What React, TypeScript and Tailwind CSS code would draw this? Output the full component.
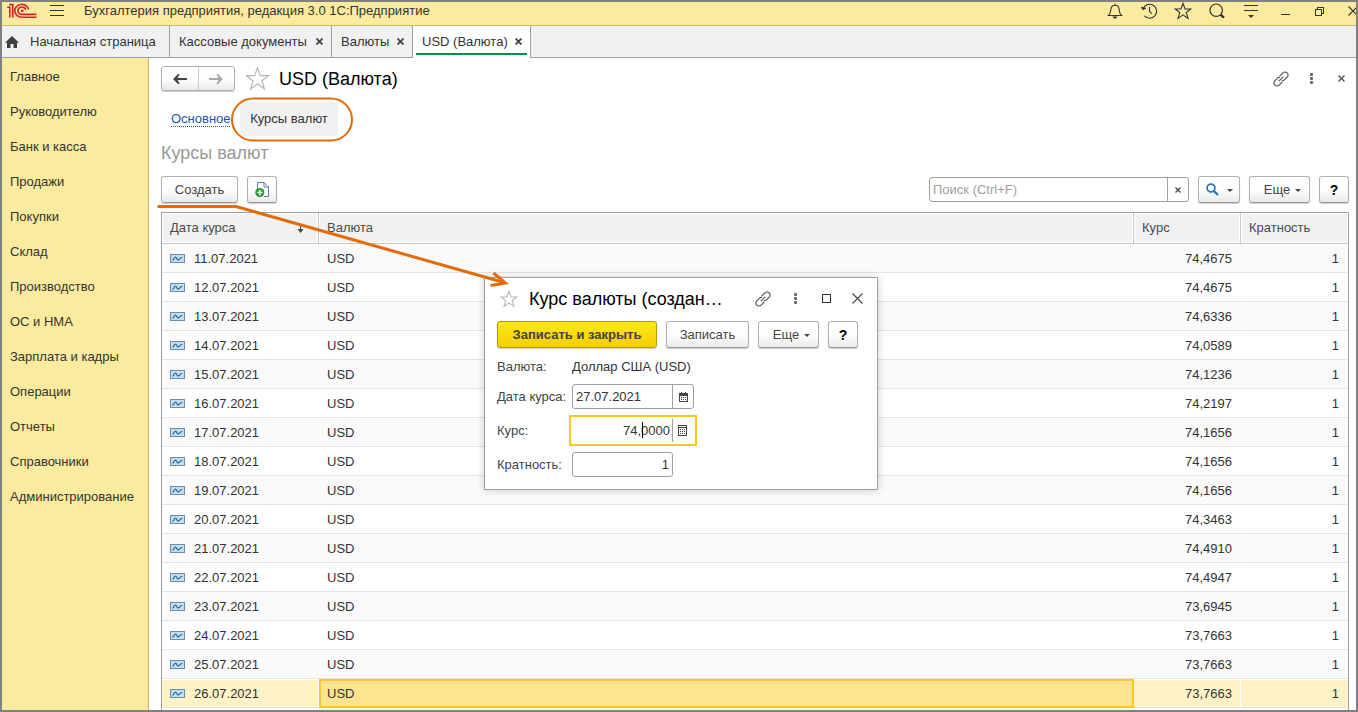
import type { ReactNode } from "react";
import clsx from "clsx";

const sections = [
  "Главное",
  "Руководителю",
  "Банк и касса",
  "Продажи",
  "Покупки",
  "Склад",
  "Производство",
  "ОС и НМА",
  "Зарплата и кадры",
  "Операции",
  "Отчеты",
  "Справочники",
  "Администрирование",
];

const rates = [
  { date: "11.07.2021", rate: "74,4675" },
  { date: "12.07.2021", rate: "74,4675" },
  { date: "13.07.2021", rate: "74,6336" },
  { date: "14.07.2021", rate: "74,0589" },
  { date: "15.07.2021", rate: "74,1236" },
  { date: "16.07.2021", rate: "74,2197" },
  { date: "17.07.2021", rate: "74,1656" },
  { date: "18.07.2021", rate: "74,1656" },
  { date: "19.07.2021", rate: "74,1656" },
  { date: "20.07.2021", rate: "74,3463" },
  { date: "21.07.2021", rate: "74,4910" },
  { date: "22.07.2021", rate: "74,4947" },
  { date: "23.07.2021", rate: "73,6945" },
  { date: "24.07.2021", rate: "73,7663" },
  { date: "25.07.2021", rate: "73,7663" },
  { date: "26.07.2021", rate: "73,7663" },
];

const selectedDate = "26.07.2021";

/* ---------- icons ---------- */

function Logo() {
  return (
    <svg width="30" height="16" viewBox="0 0 30 16" fill="none" stroke="#d8232a" strokeWidth="1.6">
      <path d="M0.2 4.2H2.8V14.6" />
      <path d="M2.2 1.6H5.8V14.6" />
      <path d="M21.6 6.4A7 6.4 0 1 0 15 14.2H29.5" />
      <path d="M18.8 6.8A4 3.6 0 1 0 15 11.4H29.5" />
      <circle cx="15.2" cy="7.8" r="0.6" />
    </svg>
  );
}

function MenuIcon() {
  return (
    <svg width="14" height="12" viewBox="0 0 14 12" stroke="#333" shapeRendering="crispEdges">
      <path d="M0 0.5H14M0 5.5H14M0 10.5H14" />
    </svg>
  );
}

function BellIcon() {
  return (
    <svg width="16" height="16" viewBox="0 0 16 16" fill="none" stroke="#333" strokeWidth="1.1">
      <path d="M8 0.6V2.2M1.5 12.5H14.5C12.5 10.8 12.4 9.6 12.2 7C12 4 10.5 2.2 8 2.2S4 4 3.8 7C3.6 9.6 3.5 10.8 1.5 12.5Z" />
      <path d="M5.4 13.6H10.6L9 15.4H7Z" fill="#333" stroke="none" />
    </svg>
  );
}

function HistoryIcon() {
  return (
    <svg width="16" height="16" viewBox="0 0 16 16" fill="none" stroke="#333" strokeWidth="1.1">
      <path d="M2.1 5.6A7 7 0 1 1 3.4 12.9" />
      <path d="M8.5 4V8.3L10.8 10.6" />
      <path d="M0 4.2L2 6.8L4.8 5.2Z" fill="#333" strokeWidth="0.8" />
    </svg>
  );
}

function StarIcon({ size, color }: { size: number; color: string }) {
  return (
    <svg width={size} height={size} viewBox="0 0 16 16" fill="none" stroke={color} strokeWidth={size > 20 ? 0.8 : 1}>
      <path d="M8 1.2L9.8 6.2H15L10.9 9.4L12.4 14.6L8 11.4L3.6 14.6L5.1 9.4L1 6.2H6.2Z" />
    </svg>
  );
}

function SearchIcon() {
  return (
    <svg width="16" height="16" viewBox="0 0 16 16" fill="none" stroke="#333">
      <circle cx="7.2" cy="7.2" r="6.2" strokeWidth="1.2" />
      <path d="M11.4 11.6L15 14.6" strokeWidth="2.4" />
    </svg>
  );
}

function ServiceIcon() {
  return (
    <svg width="14" height="14" viewBox="0 0 14 14" stroke="#333">
      <path d="M0 1.5H14M0 6.5H14" shapeRendering="crispEdges" />
      <path d="M4 11H10L7 14Z" fill="#333" stroke="none" />
    </svg>
  );
}

function MinimizeIcon() {
  return (
    <svg width="10" height="10" viewBox="0 0 10 10" stroke="#333" shapeRendering="crispEdges">
      <path d="M1 8.5H10" />
    </svg>
  );
}

function RestoreIcon() {
  return (
    <svg width="10" height="10" viewBox="0 0 10 10" fill="none" stroke="#333" shapeRendering="crispEdges">
      <path d="M1.5 3.5H7.5V9.5H1.5ZM3.5 3.5V1.5H9.5V7.5H7.5" />
    </svg>
  );
}

function CrossIcon({ size, color = "#444", width = 1.1 }: { size: number; color?: string; width?: number }) {
  return (
    <svg width={size} height={size} viewBox={`0 0 ${size} ${size}`} stroke={color} strokeWidth={width}>
      <path d={`M0.5 0.5L${size - 0.5} ${size - 0.5}M${size - 0.5} 0.5L0.5 ${size - 0.5}`} />
    </svg>
  );
}

function HomeIcon() {
  return (
    <svg width="14" height="12" viewBox="0 0 14 12" fill="#404040">
      <path d="M7 0L14 6.8H12V12H8.5V8H5.5V12H2V6.8H0L7 0Z" />
    </svg>
  );
}

function LinkIcon() {
  return (
    <svg width="16" height="16" viewBox="0 0 16 16" fill="none" stroke="#555" strokeWidth="1.2">
      <path d="M6.6 5.2L9.9 1.9A2.7 2.7 0 0 1 14.2 6.1L11.4 8.9A2.6 2.6 0 0 1 9 9.6" />
      <path d="M9.4 10.8L6.1 14.1A2.7 2.7 0 0 1 1.8 9.9L4.6 7.1A2.6 2.6 0 0 1 7 6.4" />
      <path d="M5.8 10.2L10.2 5.8" />
    </svg>
  );
}

function DotsIcon() {
  return (
    <svg width="3" height="11" viewBox="0 0 3 11" fill="#666">
      <rect width="3" height="3" rx="1" />
      <rect y="4" width="3" height="3" rx="1" />
      <rect y="8" width="3" height="3" rx="1" />
    </svg>
  );
}

function ArrowIcon({ color, flip = false }: { color: string; flip?: boolean }) {
  return (
    <svg width="14" height="10" viewBox="0 0 14 10" fill={color} className={clsx(flip && "rotate-180")}>
      <path d="M0 5L5 0H6.5V0.5L4.500 4H14V6H4.500L6.500 9.500V10H5Z" />
    </svg>
  );
}

function CopyIcon() {
  return (
    <svg width="14" height="16" viewBox="0 0 14 16" fill="none">
      <path d="M2.5 7V0.5H9L13.5 5V14.5H9" fill="#fff" stroke="#5f7d99" />
      <path d="M9 0.5V5H13.5" stroke="#5f7d99" />
      <circle cx="4.8" cy="10.6" r="4.6" fill="#2f9a3c" />
      <path d="M4.8 8V13.2M2.2 10.6H7.4" stroke="#fff" strokeWidth="1.5" />
    </svg>
  );
}

function FindIcon() {
  return (
    <svg width="13" height="13" viewBox="0 0 13 13" fill="none" stroke="#2a7ab8">
      <circle cx="5" cy="5" r="3.9" strokeWidth="1.8" />
      <path d="M7.8 7.8L12 12" strokeWidth="2.4" />
    </svg>
  );
}

function Caret() {
  return (
    <svg width="6" height="3" viewBox="0 0 6 3" fill="#444" className="mt-[2px]">
      <path d="M0 0H6L3 3Z" />
    </svg>
  );
}

function RecordIcon() {
  return (
    <svg width="15" height="9" viewBox="0 0 15 9" fill="none" className="shrink-0">
      <rect x="0.5" y="0.5" width="14" height="8" fill="#c2def3" stroke="#6c8cab" />
      <path d="M2.5 6.2C4 6 4.2 3 5.5 3S6.5 6 8 6S9.5 3.5 12.5 3.5" stroke="#15598f" strokeWidth="1.1" />
    </svg>
  );
}

function SortIcon() {
  return (
    <svg width="7" height="9" viewBox="0 0 7 9" fill="none" stroke="#444">
      <path d="M3.5 0V7" />
      <path d="M0.5 5H6.5L3.5 9Z" fill="#444" stroke="none" />
    </svg>
  );
}

function CalendarIcon() {
  return (
    <svg width="9" height="10" viewBox="0 0 9 10" fill="none" stroke="#444" shapeRendering="crispEdges">
      <path d="M0.5 1.5H8.5V9.5H0.5ZM0 2.5H9M0 3.5H9M2.5 0V2M6.5 0V2" />
      <path d="M2 5.5H7M2 7.5H7" strokeDasharray="1 1" />
    </svg>
  );
}

function CalculatorIcon() {
  return (
    <svg width="9" height="11" viewBox="0 0 9 11" fill="none" stroke="#444" shapeRendering="crispEdges">
      <path d="M0.5 0.5H8.5V10.5H0.5ZM0 2.5H9" />
      <path d="M2 4.5H7M2 6.5H7M2 8.5H7" strokeDasharray="1 1" />
    </svg>
  );
}

/* ---------- controls ---------- */

function Button({ className, label, children }: { className?: string; label?: string; children: ReactNode }) {
  return (
    <button
      type="button"
      aria-label={label}
      className={clsx(
        "flex h-[27px] shrink-0 items-center justify-center rounded-[3px] border border-[#b0b0b0] border-b-[#999] bg-linear-to-b from-white from-50% to-[#e9e9e9] text-[#444] shadow-[0_1px_1px_#ccc]",
        className,
      )}
    >
      {children}
    </button>
  );
}

function TitleBar() {
  const tools = [
    { label: "Уведомления", icon: <BellIcon /> },
    { label: "История", icon: <HistoryIcon /> },
    { label: "Избранное", icon: <StarIcon size={18} color="#333" /> },
    { label: "Поиск", icon: <SearchIcon /> },
    { label: "Сервис и настройки", icon: <ServiceIcon /> },
    { label: "Свернуть", icon: <MinimizeIcon /> },
    { label: "Восстановить", icon: <RestoreIcon /> },
    { label: "Закрыть", icon: <CrossIcon size={10} color="#333" /> },
  ];

  return (
    <header className="flex h-6 shrink-0 items-start overflow-hidden border-b border-[#c9bb6c] bg-[#fbeb9e] pl-[5px]">
      <span className="pt-px">
        <Logo />
      </span>
      <button type="button" aria-label="Меню" className="ml-3 flex h-[18px] w-4 items-center justify-center">
        <MenuIcon />
      </button>
      <span className="ml-[19px] leading-[18px] text-[#333]">
        Бухгалтерия предприятия, редакция 3.0 1С:Предприятие
      </span>
      <div className="-mr-[14px] ml-auto flex">
        {tools.map((tool) => (
          <button key={tool.label} type="button" aria-label={tool.label} className="flex h-[18px] w-[34px] items-center justify-center">
            {tool.icon}
          </button>
        ))}
      </div>
    </header>
  );
}

function Tab({ title, active = false, className }: { title: string; active?: boolean; className: string }) {
  return (
    <div className={clsx("flex items-stretch border-r border-[#a0a0a0] px-[3px]", active && "-mb-px bg-white pb-px", className)}>
      <div className={clsx("flex flex-1 items-center justify-between pr-[5px] pl-[6px]", active && "mb-[2px] border-b-2 border-[#009646] pt-1")}>
        <a href="#" className="whitespace-nowrap">
          {title}
        </a>
        <button type="button" aria-label={`Закрыть ${title}`}>
          <CrossIcon size={7} width={1.8} />
        </button>
      </div>
    </div>
  );
}

function Tabs() {
  return (
    <nav className="flex h-8 shrink-0 border-b border-[#a0a0a0] bg-[#f1f1f1]">
      <a href="#" className="flex w-[168px] items-center gap-[11px] border-r border-[#a0a0a0] pl-[3px]">
        <HomeIcon />
        Начальная страница
      </a>
      <Tab title="Кассовые документы" className="w-[162px]" />
      <Tab title="Валюты" className="w-[81px]" />
      <Tab title="USD (Валюта)" active className="w-[118px]" />
    </nav>
  );
}

function RatesTable() {
  return (
    <div className="mt-[9px] flex-1 border border-b-0 border-[#a0a0a0]">
      <table className="w-full table-fixed border-separate border-spacing-0">
        <colgroup>
          <col className="w-[157px]" />
          <col />
          <col className="w-[107px]" />
          <col className="w-[107px]" />
        </colgroup>
        <thead>
          <tr className="h-[31px] bg-[#f1f1f1] text-left text-[#4a4a4a] [&>th]:border-b [&>th]:border-[#c8c8c8] [&>th]:font-normal [&>th]:shadow-[inset_0_0_0_1px_#fff]">
            <th className="border-r px-2">
              <span className="flex items-center justify-between pr-[6px]">
                Дата курса
                <SortIcon />
              </span>
            </th>
            <th className="border-r px-2">Валюта</th>
            <th className="border-r px-2">Курс</th>
            <th className="px-2">Кратность</th>
          </tr>
        </thead>
        <tbody>
          {rates.map(({ date, rate }) => {
            const selected = date === selectedDate;
            return (
              <tr
                key={date}
                className={clsx(
                  "h-[29px] [&>td]:border-b [&>td]:border-b-[#e4e4e4] [&>td]:pt-px",
                  selected ? "bg-[#fff2c7] [&>td]:shadow-[inset_0_1px_0_#fff]" : "odd:bg-[#fafafa]",
                )}
              >
                <td className={clsx("pl-2", selected && "border-r border-r-white")}>
                  <span className="flex items-center gap-[9px]">
                    <RecordIcon />
                    {date}
                  </span>
                </td>
                <td className={clsx("px-2", selected && "bg-[#ffe48f] outline-2 -outline-offset-2 outline-[#fbc81e]")}>USD</td>
                <td className={clsx("border-r pr-2 text-right", selected ? "border-r-white" : "border-r-transparent")}>{rate}</td>
                <td className="pr-[9px] text-right">1</td>
              </tr>
            );
          })}
        </tbody>
      </table>
    </div>
  );
}

function RateDialog() {
  return (
    <div
      role="dialog"
      aria-labelledby="dialog-title"
      className="absolute top-[275px] left-[482px] w-[394px] border border-[#a0a0a0] bg-white px-3 pb-3 text-[#444] shadow-[0_0_8px_#0003]"
    >
      <div className="flex h-[43px] items-center pb-[2px]">
        <button type="button" aria-label="В избранное" className="ml-[3px]">
          <StarIcon size={18} color="#b4b9c0" />
        </button>
        <h2 id="dialog-title" className="ml-[11px] flex-1 text-[18px] whitespace-nowrap text-black">
          Курс валюты (создан…
        </h2>
        <div className="-mr-2 flex items-center">
          <button type="button" aria-label="Ссылка" className="flex w-8 justify-center">
            <LinkIcon />
          </button>
          <button type="button" aria-label="Действия" className="flex w-8 justify-center">
            <DotsIcon />
          </button>
          <button type="button" aria-label="Развернуть" className="flex w-[30px] justify-center">
            <span className="h-[9px] w-[9px] border border-[#333]" />
          </button>
          <button type="button" aria-label="Закрыть" className="flex w-8 justify-center">
            <CrossIcon size={11} />
          </button>
        </div>
      </div>

      <div className="flex gap-[9px]">
        <button
          type="button"
          className="h-[27px] w-40 rounded-[3px] border border-[#b89b00] bg-linear-to-b from-[#ffe81a] to-[#f2cf00] font-bold text-[#444] shadow-[0_1px_1px_#ccc]"
        >
          Записать и закрыть
        </button>
        <Button className="w-[83px]">Записать</Button>
        <Button className="w-[61px] gap-[5px] pl-[6px]">
          Еще
          <Caret />
        </Button>
        <Button className="w-[30px] text-[14px] font-bold text-black">?</Button>
      </div>

      <div className="flex h-9 items-center pt-px">
        <span className="w-[75px]">Валюта:</span>
        <span className="text-[#333]">Доллар США (USD)</span>
      </div>

      <div className="flex items-center">
        <label htmlFor="rate-date" className="w-[75px] whitespace-nowrap">
          Дата курса:
        </label>
        <div className="flex h-[25px] w-[122px] rounded-[3px] border border-[#a0a0a0]">
          <input id="rate-date" defaultValue="27.07.2021" className="w-[99px] pl-[3px] text-[#333] outline-none" />
          <button type="button" aria-label="Выбрать дату" className="flex flex-1 items-center justify-center border-l border-[#a0a0a0]">
            <CalendarIcon />
          </button>
        </div>
      </div>

      <div className="mt-[6px] flex items-center">
        <label htmlFor="rate-value" className="w-[72px]">
          Курс:
        </label>
        <div className="relative flex h-[31px] w-32 border-2 border-[#fbc81e] py-[2px]">
          <input id="rate-value" defaultValue="74,0000" className="w-[101px] pr-[2px] text-right text-[#333] outline-none" />
          <button type="button" aria-label="Калькулятор" className="flex w-5 items-center justify-center border-l border-[#a0a0a0]">
            <CalculatorIcon />
          </button>
          <span className="absolute top-[5px] left-[71px] h-4 w-px bg-black" />
        </div>
      </div>

      <div className="mt-[6px] flex items-center">
        <label htmlFor="rate-multiplicity" className="w-[75px]">
          Кратность:
        </label>
        <input
          id="rate-multiplicity"
          defaultValue="1"
          className="h-[25px] w-[101px] rounded-[3px] border border-[#a0a0a0] pr-[3px] text-right text-[#333] outline-none"
        />
      </div>
    </div>
  );
}

// orange marks: ring round the current section, arrow from "Создать" to the dialog
function Annotations() {
  return (
    <svg
      width="520"
      height="300"
      viewBox="0 0 520 300"
      fill="none"
      stroke="#e36c0a"
      className="pointer-events-none absolute -top-[2px] -left-[2px]"
    >
      <rect x="232" y="98.5" width="120" height="42" rx="21" strokeWidth="2" />
      <path d="M157.5 206.5H236L504 282.5" strokeWidth="3" />
      <path d="M493.5 273L505.5 283L490.5 285.5" strokeWidth="3" />
    </svg>
  );
}

export default function App() {
  return (
    <div className="relative flex h-screen flex-col overflow-hidden border-2 border-[#808080] bg-white font-['Liberation_Sans',Arial,sans-serif] text-[13px] leading-4 text-[#333]">
      <TitleBar />
      <Tabs />

      <div className="flex min-h-0 flex-1">
        <aside className="w-[147px] shrink-0 border-r border-[#c9bb6c] bg-[#fbeb9e] pt-px">
          {sections.map((section) => (
            <a key={section} href="#" className="flex h-[35px] items-center pl-2">
              {section}
            </a>
          ))}
        </aside>

        <main className="flex min-w-0 flex-1 flex-col pt-2 pr-[7px] pl-3">
          <div className="flex h-[25px] shrink-0 items-center">
            <div className="flex h-[25px] w-[74px] rounded-[3px] border border-[#b0b0b0] bg-linear-to-b from-white from-50% to-[#e9e9e9] shadow-[0_1px_1px_#ccc]">
              <button type="button" aria-label="Назад" className="flex flex-1 items-center justify-center border-r border-[#ccc]">
                <ArrowIcon color="#444" />
              </button>
              <button type="button" aria-label="Вперед" className="flex flex-1 items-center justify-center">
                <ArrowIcon color="#aaa" flip />
              </button>
            </div>
            <button type="button" aria-label="В избранное" className="ml-[10px]">
              <StarIcon size={25} color="#b4b9c0" />
            </button>
            <h1 className="ml-[9px] text-[18px] text-black">USD (Валюта)</h1>
            <div className="-mr-[7px] ml-auto flex items-center">
              <button type="button" aria-label="Ссылка" className="flex w-[30px] justify-center">
                <LinkIcon />
              </button>
              <button type="button" aria-label="Действия" className="flex w-[30px] justify-center">
                <DotsIcon />
              </button>
              <button type="button" aria-label="Закрыть" className="flex w-[30px] justify-center">
                <CrossIcon size={7} />
              </button>
            </div>
          </div>

          <nav className="mt-[10px] flex h-[34px] shrink-0 items-center gap-[10px] pt-px pl-[10px]">
            <a href="#" className="w-[59px] border-b border-dotted border-[#1a55b0] leading-[15px] whitespace-nowrap text-[#1a55b0]">
              Основное
            </a>
            <a href="#" className="flex h-[34px] w-[98px] items-center justify-center rounded-[3px] bg-[#f1f1f1]">
              Курсы валют
            </a>
          </nav>

          <h2 className="flex h-9 shrink-0 items-center text-[18px] text-[#999]">Курсы валют</h2>

          <div className="mt-[5px] flex shrink-0 items-center gap-[9px]">
            <Button className="w-[77px]">Создать</Button>
            <Button className="w-[30px]" label="Создать копированием">
              <CopyIcon />
            </Button>
            <div className="ml-auto flex h-[25px] w-[260px] rounded-[3px] border border-[#a0a0a0]">
              <input
                aria-label="Поиск"
                placeholder="Поиск (Ctrl+F)"
                className="min-w-0 flex-1 pl-[3px] outline-none placeholder:text-[#a0a0a0]"
              />
              <button type="button" aria-label="Очистить" className="flex w-[21px] items-center justify-center border-l border-[#a0a0a0]">
                <CrossIcon size={6} width={1.3} />
              </button>
            </div>
            <Button className="w-[42px] gap-2" label="Найти">
              <FindIcon />
              <Caret />
            </Button>
            <Button className="w-[61px] gap-[5px] pl-[6px]">
              Еще
              <Caret />
            </Button>
            <Button className="w-[30px] text-[14px] font-bold text-black">?</Button>
          </div>

          <RatesTable />
        </main>
      </div>

      <RateDialog />
      <Annotations />
    </div>
  );
}
